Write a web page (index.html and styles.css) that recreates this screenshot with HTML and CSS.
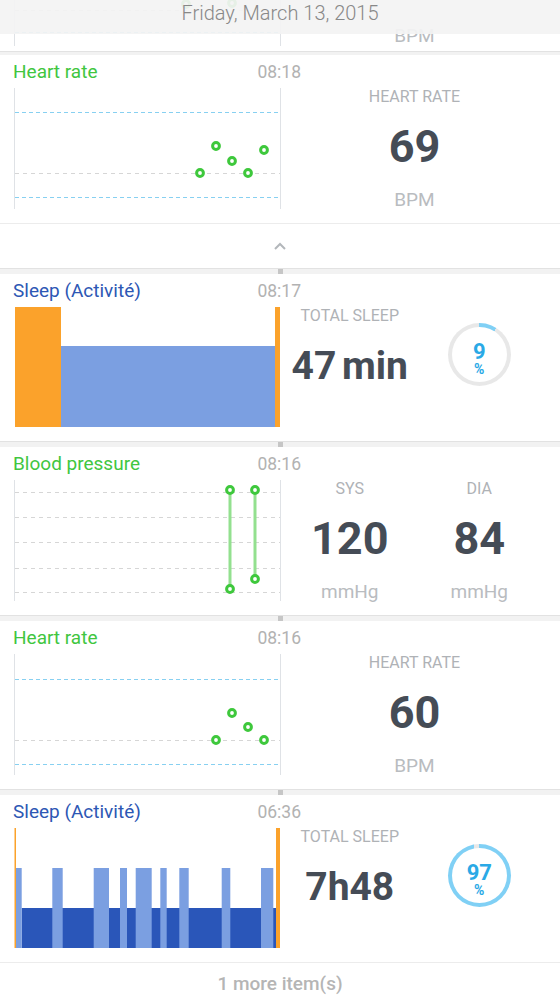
FILE: index.html
```html
<!DOCTYPE html>
<html lang="en">
<head>
<meta charset="utf-8">
<title>Timeline</title>
<link rel="stylesheet" href="styles.css">
</head>
<body>
<div class="screen">
  <div class="date-bar">Friday, March 13, 2015</div>

  <div class="card clip">
    <div class="card-body">
      <svg class="chart" width="267" height="121" viewBox="0 0 267 121">
        <line class="axis" x1="0.5" y1="0" x2="0.5" y2="121"/>
        <line class="axis" x1="266.5" y1="0" x2="266.5" y2="121"/>
        <line class="grid" x1="1" y1="85.5" x2="266" y2="85.5"/>
        <line class="limit" x1="1" y1="107.5" x2="266" y2="107.5"/>
        <circle class="dot" cx="172" cy="79" r="3.4"/>
        <circle class="dot" cx="218" cy="78" r="3.4"/>
      </svg>
      <div class="panel single">
        <div class="metric tail"><div class="unit">BPM</div></div>
      </div>
    </div>
  </div>
  <div class="gap thin"></div>

  <div class="card">
    <div class="card-head"><span class="title green">Heart rate</span><span class="time">08:18</span></div>
    <div class="card-body">
      <svg class="chart" width="267" height="121" viewBox="0 0 267 121">
        <line class="axis" x1="0.5" y1="0" x2="0.5" y2="121"/>
        <line class="axis" x1="266.5" y1="0" x2="266.5" y2="121"/>
        <line class="limit" x1="1" y1="24.5" x2="266" y2="24.5"/>
        <line class="grid" x1="1" y1="85.5" x2="266" y2="85.5"/>
        <line class="limit" x1="1" y1="109.5" x2="266" y2="109.5"/>
        <circle class="dot" cx="186" cy="85" r="3.4"/>
        <circle class="dot" cx="202" cy="58" r="3.4"/>
        <circle class="dot" cx="218" cy="73" r="3.4"/>
        <circle class="dot" cx="234" cy="85" r="3.4"/>
        <circle class="dot" cx="250" cy="62" r="3.4"/>
      </svg>
      <div class="panel single">
        <div class="metric">
          <div class="label">HEART RATE</div>
          <div class="value">69</div>
          <div class="unit">BPM</div>
        </div>
      </div>
    </div>
  </div>
  <div class="toggle">
    <svg class="chevron" width="12" height="8" viewBox="0 0 12 8"><polyline points="1,7 6,2 11,7"/></svg>
  </div>
  <div class="gap"><div class="tick"></div></div>

  <div class="card">
    <div class="card-head"><span class="title blue">Sleep (Activité)</span><span class="time">08:17</span></div>
    <div class="card-body">
      <svg class="chart" width="267" height="121" viewBox="0 0 267 121">
        <rect class="awake" x="1" y="0" width="46" height="120"/>
        <rect class="light" x="47" y="39" width="214" height="81"/>
        <rect class="awake" x="261" y="0" width="5" height="120"/>
      </svg>
      <div class="panel double">
        <div class="metric">
          <div class="label">TOTAL SLEEP</div>
          <div class="value sleep">47 min</div>
        </div>
        <div class="ring-cell">
          <div class="ring" style="--p: 9%">
            <div class="ring-inner"><div class="ring-label">9
%</div></div>
          </div>
        </div>
      </div>
    </div>
  </div>
  <div class="gap"><div class="tick"></div></div>

  <div class="card">
    <div class="card-head"><span class="title green">Blood pressure</span><span class="time">08:16</span></div>
    <div class="card-body">
      <svg class="chart" width="267" height="121" viewBox="0 0 267 121">
        <line class="axis" x1="0.5" y1="0" x2="0.5" y2="121"/>
        <line class="axis" x1="266.5" y1="0" x2="266.5" y2="121"/>
        <line class="grid" x1="1" y1="12.5" x2="266" y2="12.5"/>
        <line class="grid" x1="1" y1="37.5" x2="266" y2="37.5"/>
        <line class="grid" x1="1" y1="62.5" x2="266" y2="62.5"/>
        <line class="grid" x1="1" y1="88.5" x2="266" y2="88.5"/>
        <line class="grid" x1="1" y1="112.5" x2="266" y2="112.5"/>
        <line class="bp-bar" x1="216" y1="10" x2="216" y2="109"/>
        <line class="bp-bar" x1="241" y1="10" x2="241" y2="99"/>
        <circle class="dot" cx="216" cy="10" r="3.4"/>
        <circle class="dot" cx="216" cy="109" r="3.4"/>
        <circle class="dot" cx="241" cy="10" r="3.4"/>
        <circle class="dot" cx="241" cy="99" r="3.4"/>
      </svg>
      <div class="panel double">
        <div class="metric">
          <div class="label">SYS</div>
          <div class="value">120</div>
          <div class="unit">mmHg</div>
        </div>
        <div class="metric">
          <div class="label">DIA</div>
          <div class="value">84</div>
          <div class="unit">mmHg</div>
        </div>
      </div>
    </div>
  </div>
  <div class="gap"><div class="tick"></div></div>

  <div class="card">
    <div class="card-head"><span class="title green">Heart rate</span><span class="time">08:16</span></div>
    <div class="card-body">
      <svg class="chart" width="267" height="121" viewBox="0 0 267 121">
        <line class="axis" x1="0.5" y1="0" x2="0.5" y2="121"/>
        <line class="axis" x1="266.5" y1="0" x2="266.5" y2="121"/>
        <line class="limit" x1="1" y1="25.5" x2="266" y2="25.5"/>
        <line class="grid" x1="1" y1="86.5" x2="266" y2="86.5"/>
        <line class="limit" x1="1" y1="110.5" x2="266" y2="110.5"/>
        <circle class="dot" cx="202" cy="86" r="3.4"/>
        <circle class="dot" cx="218" cy="59" r="3.4"/>
        <circle class="dot" cx="234" cy="73" r="3.4"/>
        <circle class="dot" cx="250" cy="86" r="3.4"/>
      </svg>
      <div class="panel single">
        <div class="metric">
          <div class="label">HEART RATE</div>
          <div class="value">60</div>
          <div class="unit">BPM</div>
        </div>
      </div>
    </div>
  </div>
  <div class="gap"><div class="tick"></div></div>

  <div class="card">
    <div class="card-head"><span class="title blue">Sleep (Activité)</span><span class="time">06:36</span></div>
    <div class="card-body">
      <svg class="chart" width="267" height="121" viewBox="0 0 267 121">
        <rect class="awake" x="0.5" y="0" width="1.5" height="120"/>
        <rect class="deep" x="7.7" y="80" width="254.3" height="40"/>
        <rect class="light" x="2" y="40" width="5.7" height="80"/>
        <rect class="light" x="38.3" y="40" width="10.4" height="80"/>
        <rect class="light" x="79.7" y="40" width="15.3" height="80"/>
        <rect class="light" x="106" y="40" width="7" height="80"/>
        <rect class="light" x="121.7" y="40" width="16" height="80"/>
        <rect class="light" x="146.3" y="40" width="6.4" height="80"/>
        <rect class="light" x="165.3" y="40" width="9.4" height="80"/>
        <rect class="light" x="207.7" y="40" width="8.6" height="80"/>
        <rect class="light" x="247" y="40" width="12.3" height="80"/>
        <rect class="awake" x="262" y="0" width="4" height="120"/>
      </svg>
      <div class="panel double">
        <div class="metric">
          <div class="label">TOTAL SLEEP</div>
          <div class="value sleep">7h48</div>
        </div>
        <div class="ring-cell">
          <div class="ring" style="--p: 97%">
            <div class="ring-inner"><div class="ring-label">97
%</div></div>
          </div>
        </div>
      </div>
    </div>
  </div>

  <div class="footer">1 more item(s)</div>
</div>
</body>
</html>
```

FILE: styles.css
```css
* { box-sizing: border-box; }

html, body {
  margin: 0;
  padding: 0;
  background: #ffffff;
}

body {
  font-family: Roboto, "Liberation Sans", Arial, sans-serif;
}

.screen {
  position: relative;
  width: 560px;
  height: 996px;
  overflow: hidden;
  background: #ffffff;
}

.date-bar {
  position: absolute;
  top: 0;
  left: 0;
  right: 0;
  height: 34px;
  background: rgba(243, 243, 243, 0.93);
  color: #888888;
  font-weight: 300;
  font-size: 20px;
  line-height: 26px;
  text-align: center;
  z-index: 2;
}

.card {
  background: #ffffff;
  padding: 6px 0 13px 13px;
}

.card.clip {
  height: 51px;
  padding: 0 0 5px 13px;
  overflow: hidden;
  display: flex;
  flex-direction: column;
  justify-content: flex-end;
}

.card.clip .card-body {
  flex: none;
  height: 121px;
}

.card-head {
  width: 288px;
  height: 24px;
  display: flex;
  justify-content: space-between;
  align-items: baseline;
}

.title {
  font-size: 19px;
  line-height: 22px;
}

.title.green { color: #41c63f; }
.title.blue { color: #2d57b4; }

.time {
  font-size: 17.5px;
  line-height: 22px;
  color: #b2b2b2;
}

.card-body {
  display: flex;
  margin-top: 3px;
}

.chart {
  display: block;
  flex: none;
  margin-left: 1px;
}

.axis { stroke: #dfe2e6; stroke-width: 1; }
.grid { stroke: #d6d6d6; stroke-width: 1; stroke-dasharray: 4 4; }
.limit { stroke: #87d0f1; stroke-width: 1; stroke-dasharray: 4 3; }
.dot { fill: #ffffff; stroke: #3ec83c; stroke-width: 3; }
.bp-bar { stroke: #93e08f; stroke-width: 3; }
.awake { fill: #fba22b; }
.light { fill: #7b9fe1; }
.deep { fill: #2a56b9; }

.panel {
  flex: 1;
  display: grid;
  padding: 0 16px 0 4px;
  align-content: start;
}

.panel.single { grid-template-columns: 1fr; }
.panel.double { grid-template-columns: 1fr 1fr; }

.metric {
  display: flex;
  flex-direction: column;
  align-items: center;
}

.metric.tail { padding-top: 101px; }
.metric.tail .unit { margin-top: 0; }

.label {
  font-size: 16px;
  line-height: 18px;
  color: #afb2b6;
  white-space: nowrap;
}

.value {
  margin-top: 16px;
  font-size: 45px;
  font-weight: 700;
  line-height: 50px;
  color: #454c56;
  white-space: nowrap;
}

.value.sleep {
  font-size: 39px;
  word-spacing: -4px;
}

.unit {
  margin-top: 18px;
  font-size: 19px;
  line-height: 20px;
  color: #b9bcc0;
}

.ring-cell {
  display: flex;
  justify-content: center;
  padding-top: 16px;
}

.ring {
  width: 63px;
  height: 63px;
  border-radius: 50%;
  background: conic-gradient(#80d0f5 0 var(--p), #e8e8e8 0);
  display: flex;
  align-items: center;
  justify-content: center;
}

.ring-inner {
  width: 55px;
  height: 55px;
  border-radius: 50%;
  background: #ffffff;
  display: flex;
  flex-direction: column;
  align-items: center;
  padding-top: 15px;
}

.ring-label {
  white-space: pre-line;
  text-align: center;
  color: #2aa9e6;
  font-weight: 700;
  font-size: 14px;
  line-height: 14px;
}

.ring-label::first-line {
  font-size: 22px;
  line-height: 20px;
}

.toggle {
  height: 45px;
  border-top: 1px solid #ececec;
  display: flex;
  align-items: center;
  justify-content: center;
}

.chevron polyline {
  fill: none;
  stroke: #b3b7bb;
  stroke-width: 2;
}

.gap {
  height: 6px;
  border-top: 1px solid #e2e2e2;
  background: #f2f2f2;
}

.gap.thin { height: 4px; }

.tick {
  width: 5px;
  height: 5px;
  margin-left: 278px;
  background: #c6c6c6;
}

.footer {
  border-top: 1px solid #ececec;
  padding-top: 9px;
  text-align: center;
  font-size: 19px;
  font-weight: 500;
  line-height: 24px;
  color: #b5b5b5;
}
```
